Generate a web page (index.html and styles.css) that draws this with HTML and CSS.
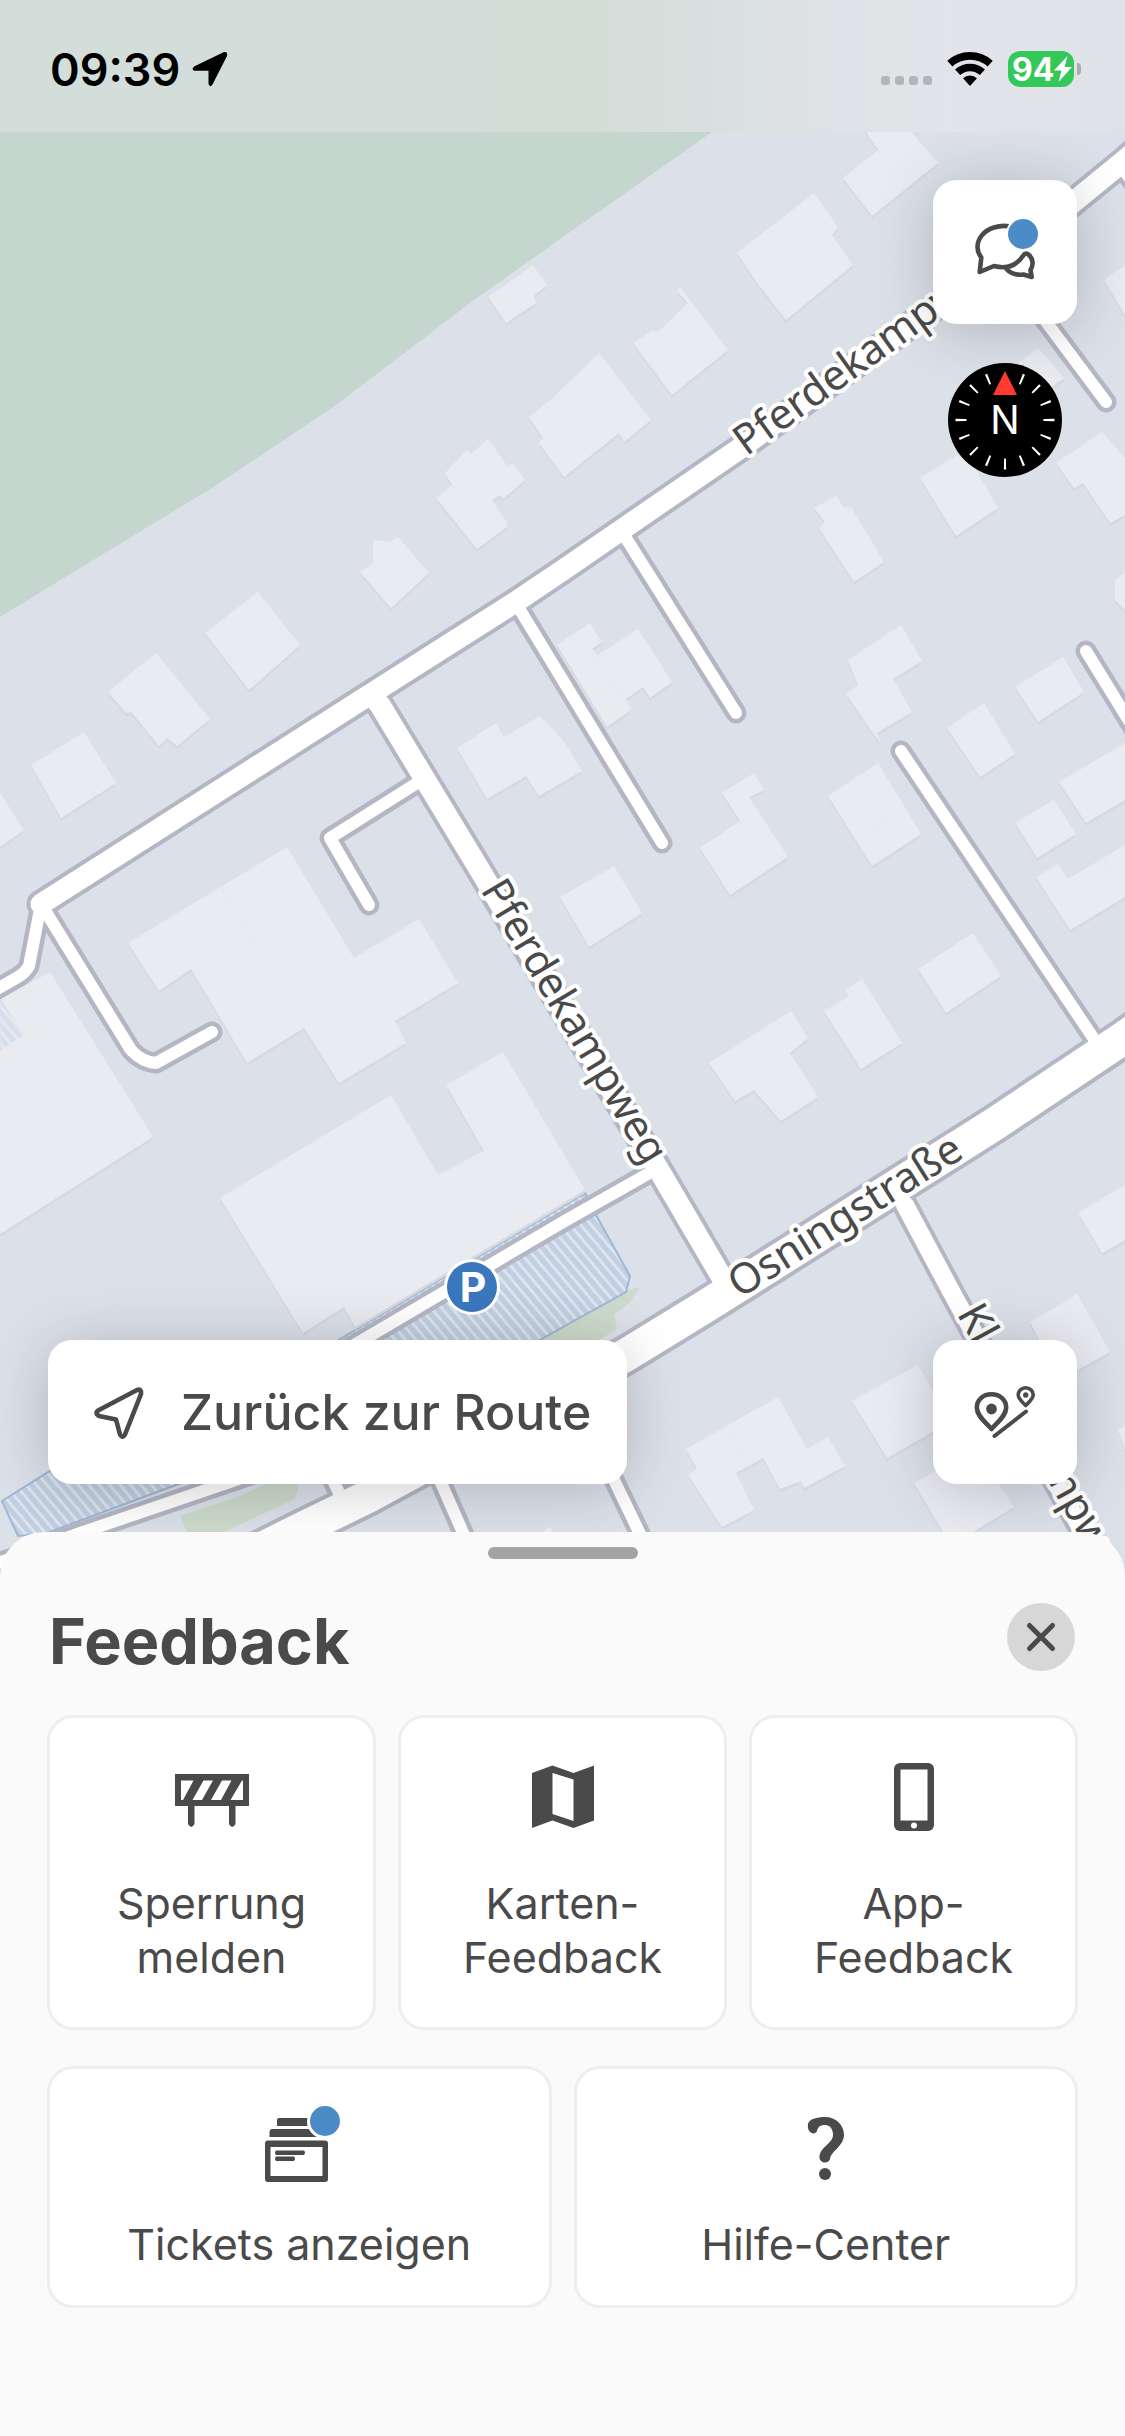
FILE: index.html
```html
<!DOCTYPE html>
<html lang="de">
<head>
    <meta charset="UTF-8">
    <meta name="viewport" content="width=device-width, initial-scale=1.0">
    <title>Feedback</title>
    <link rel="stylesheet" href="styles.css">
</head>
<body>
    <main class="map">
        <svg class="map-canvas" viewBox="0 0 1125 1580" preserveAspectRatio="xMidYMin slice" aria-hidden="true">
            <defs>
                <pattern id="hatch" width="8" height="8" patternUnits="userSpaceOnUse" patternTransform="rotate(-40)">
                    <rect width="8" height="8" fill="#c1cfe1"/>
                    <rect width="3" height="8" fill="#dce4ef"/>
                </pattern>
                <path id="main-road" d="M41 904 L366 697 L517 601 L563 570 L742 447 L934 308 L1060 213 L1125 160 L1150 138"/>
                <path id="south-road" d="M374 698 L380 705 L478 867 L663 1177 L728 1288"/>
                <path id="osning" d="M200 1580 L295 1532 L367 1497 L450 1452 L626 1355 L706 1306 L993 1125 L1125 1037 L1160 1012"/>
                <path id="east-road" d="M905 1205 L952 1293 L1083 1532 L1105 1580"/>
                <g id="lanes">
                    <path d="M425 778 L330 838 L369 905"/>
                    <path d="M517 605 L662 843"/>
                    <path d="M624 535 L736 713"/>
                    <path d="M901 751 L1098 1045"/>
                    <path d="M1086 651 L1150 755"/>
                    <path d="M1000 260 L1106 402"/>
                    <path d="M1120 165 L1150 205"/>
                    <path d="M41 904 L36 930 L29 966 Q26 972 18 977 L-10 993"/>
                    <path d="M41 904 L131 1050 Q142 1062 156 1063 L212 1032"/>
                    <path d="M660 1167 L563 1222 L361 1341 L221 1420"/>
                    <path d="M300 1458 L221 1485 L83 1532 L-10 1566"/>
                    <path d="M345 1505 L318 1450"/>
                    <path d="M425 1450 L442 1485 L475 1560"/>
                    <path d="M595 1440 L614 1480 L655 1565"/>
                </g>
                <path id="label-north" d="M563 570 L742 445 L934 307 L1060 213"/>
                <path id="label-osning" d="M706 1306 L993 1125"/>
            </defs>

            <rect width="1125" height="1580" fill="#dce0e9"/>
            <path fill="#c5d6ce" d="M0 0H900L712 132L563 237L470 303L336 405L215 486L13 609L0 617Z"/>

            <g class="park">
                <path d="M640 1287L630 1302L614 1315L617 1329L599 1340L537 1362V1330L626 1291Z"/>
                <path d="M180 1516L235 1498L264 1485L299 1470V1485L295 1499L224 1532H187Z"/>
            </g>
            <g class="parking">
                <path d="M330 1345L585 1193L596 1215L630 1276L626 1292L563 1327L531 1345Z"/>
                <path d="M2 1501L50 1471L120 1440L230 1465L176 1485L47 1533L18 1536Z"/>
            </g>

            <g class="buildings">
                <path d="M488 297L533 265L547 285L534 296L536 303L506 323Z"/>
                <path d="M373 540L390 542L398 537L429 573L391 608L360 572L373 563Z"/>
                <path d="M445 473L467 450L471 454L488 439L508 467L513 463L525 480L503 499L500 495L492 500L507 523V527L477 549L436 498L452 485Z"/>
                <path d="M529 417L553 398L599 353L651 420L624 442L619 433L564 477L539 443L543 438Z"/>
                <path d="M633 343L653 330L658 332L688 303L677 291L680 287L728 350L672 395Z"/>
                <path d="M737 253L814 193L838 227L832 235L853 265L786 320L757 283Z"/>
                <path d="M843 178L878 150L866 132L850 110H895L911 132L938 163L872 216Z"/>
                <path d="M814 508L836 496L844 508L851 507L884 562L854 582L819 528L825 522Z"/>
                <path d="M920 478L957 455L972 463L998 508L956 536Z"/>
                <path d="M1056 463L1102 432L1125 458V515L1110 523L1083 483L1074 488Z"/>
                <path d="M1018 363L1038 348L1064 378L1045 392Z"/>
                <path d="M1104 280L1125 265V315Z"/>
                <path d="M1115 580L1125 572V610L1115 600Z"/>
                <path d="M205 633L258 592L300 645L249 690Z"/>
                <path d="M108 692L156 653L210 719L177 746L167 738L159 746L131 712L126 713Z"/>
                <path d="M31 765L84 732L116 783L61 818Z"/>
                <path d="M0 793L24 830L0 847Z"/>
                <path d="M128 943L287 847L354 958L419 919L458 983L395 1021L406 1043L339 1083L304 1028L247 1063L191 969L159 991Z"/>
                <path d="M0 1000L50 972L153 1137L0 1234Z"/>
                <path d="M220 1198L391 1095L438 1175L484 1151L446 1085L503 1052L585 1190L355 1327L344 1307L303 1333Z"/>
                <path d="M457 748L496 723L504 737L540 716L563 740L582 771L539 796L526 776L487 799Z"/>
                <path d="M557 645L590 623L602 642L592 649L598 655L638 629L672 682L650 698L643 687L626 699L631 710L607 727Z"/>
                <path d="M560 897L614 866L642 913L589 947Z"/>
                <path d="M722 793L754 773L764 790L749 797L788 857L730 895L700 848L740 821Z"/>
                <path d="M828 796L878 763L921 834L872 866Z"/>
                <path d="M848 660L901 625L922 661L893 679L912 712L877 733L880 743L846 694L858 685Z"/>
                <path d="M947 728L984 703L1015 754L980 777Z"/>
                <path d="M1015 687L1063 657L1084 692L1038 722Z"/>
                <path d="M1059 782L1125 743V800L1086 823Z"/>
                <path d="M1015 823L1054 800L1076 834L1037 858Z"/>
                <path d="M1036 877L1058 864L1068 879L1125 845V897L1070 930Z"/>
                <path d="M918 969L973 933L1001 976L946 1013Z"/>
                <path d="M824 1011L848 997L846 990L862 979L902 1043L861 1069Z"/>
                <path d="M709 1063L791 1011L808 1038L790 1053L818 1097L781 1121L754 1090L735 1101Z"/>
                <path d="M1078 1213L1125 1185V1240L1102 1253Z"/>
                <path d="M1030 1322L1077 1294L1110 1352L1060 1380Z"/>
                <path d="M852 1401L918 1365L950 1422L887 1458Z"/>
                <path d="M914 1483L975 1450L1014 1507L960 1540L943 1532Z"/>
                <path d="M686 1449L778 1397L807 1449L828 1437L845 1466L804 1488L801 1481L780 1489L763 1458L736 1473L754 1510L722 1527L688 1475L697 1469Z"/>
                <path d="M1118 1430L1125 1425V1450Z"/>
                <path d="M540 1533L550 1527L556 1536Z"/>
            </g>
            <path class="seams" d="M222 888L304 1028M581 636L631 710M865 835L903 808M730 1431L747 1465M1104 858L1124 897M519 280L528 292"/>
            <path fill="url(#hatch)" opacity=".45" d="M0 998L24 1035L0 1051Z"/>

            <g class="roads casing">
                <use href="#lanes"/>
                <use href="#east-road" class="medium"/>
                <use href="#south-road" class="main"/>
                <use href="#main-road" class="main"/>
                <use href="#osning" class="wide"/>
            </g>
            <g class="roads fill">
                <use href="#lanes"/>
                <use href="#east-road" class="medium"/>
                <use href="#south-road" class="main"/>
                <use href="#main-road" class="main"/>
                <use href="#osning" class="wide"/>
            </g>

            <g class="street-names">
                <text dy="12"><textPath href="#label-north" startOffset="215">Pferdekampweg</textPath></text>
                <text dy="10"><textPath href="#south-road" startOffset="219">Pferdekampweg</textPath></text>
                <text dy="12"><textPath href="#label-osning" startOffset="32">Osningstraße</textPath></text>
                <text dy="6"><textPath href="#east-road" startOffset="120">Kl</textPath></text>
                <text dy="6"><textPath href="#east-road" startOffset="296">mpweg</textPath></text>
            </g>

            <circle cx="472" cy="1287" r="28" fill="#fff"/>
            <circle cx="472" cy="1287" r="25" fill="#3a77bd"/>
            <text class="parking-sign" x="473" y="1302">P</text>
        </svg>

        <header class="status-bar">
            <div class="status-left">
                <span class="clock">09:39</span>
                <svg width="36" height="36" viewBox="0 0 36 36" aria-hidden="true">
                    <path d="M31.500 1.200L2 15.500Q-1 19 2.500 19.800H16.500V33Q18 37 20.500 33.500L35 5Q36 0 31.500 1.200Z"/>
                </svg>
            </div>
            <div class="status-right">
                <svg width="51" height="36" viewBox="0 0 51 36" fill="#b4b5ba" aria-hidden="true">
                    <rect y="25" width="9" height="9" rx="3"/>
                    <rect x="14" y="25" width="9" height="9" rx="3"/>
                    <rect x="28" y="25" width="9" height="9" rx="3"/>
                    <rect x="42" y="25" width="9" height="9" rx="3"/>
                </svg>
                <svg width="46" height="36" viewBox="0 0 46 36" aria-hidden="true">
                    <g fill="none" stroke="#000" stroke-width="7.600">
                        <path d="M2.800 12.600A30.200 30.200 0 0 1 43.200 12.600"/>
                        <path d="M10.600 21.300A18.500 18.500 0 0 1 35.400 21.300"/>
                    </g>
                    <path d="M23 35L16 27.200A10.500 10.500 0 0 1 30 27.200Z"/>
                </svg>
                <div class="battery">
                    <span>94</span>
                    <svg width="18" height="26" viewBox="0 0 18 26" fill="#fff" aria-hidden="true">
                        <path d="M13.500 0L0 14.500H7.500L4.500 26L18 11H10.500Z"/>
                    </svg>
                </div>
            </div>
        </header>

        <div class="side-controls">
            <button type="button" class="float-btn" aria-label="Feedback">
                <svg width="64" height="64" viewBox="0 0 64 64" aria-hidden="true">
                    <g fill="none" stroke="#4a4a4a" stroke-width="4.600" stroke-linejoin="round">
                        <path d="M36 6.200C31 5.500 26 5.800 21 7.500C10 11 4.500 19 4.500 27C4.500 31.500 6 34.500 8.300 37.500L6.700 52L21 46C34 49.500 44 45 50.300 35.500C51.500 33 54 33 56 35C60.500 39 60.500 45.500 57.500 50L58.700 57L50.500 54.500C43 55.500 37 53 33 48.500"/>
                    </g>
                    <circle cx="50" cy="14" r="17" fill="#fff"/>
                    <circle cx="50" cy="14" r="15" fill="#4a8bc8"/>
                </svg>
            </button>
            <svg class="compass" width="114" height="114" viewBox="-57 -57 114 114" role="img" aria-label="Kompass">
                <circle r="57"/>
                <circle r="44" fill="none" stroke="#fff" stroke-width="11" pathLength="160" stroke-dasharray="1.200 8.800" stroke-dashoffset=".6"/>
                <path d="M-4 -52H4V-30H-4Z"/>
                <path d="M0 -49L12 -25H-12Z" fill="#ff3b30"/>
                <text y="14">N</text>
            </svg>
        </div>

        <div class="bottom-controls">
            <button type="button" class="float-btn route-btn">
                <svg width="56" height="56" viewBox="0 0 56 56" fill="none" stroke="#4a4a4a" stroke-width="4.600" stroke-linejoin="round" aria-hidden="true">
                    <path d="M46 6L8 26Q3 29 8 32L25 35.500L29 50.500Q31.500 55 34 50.500L50 10Q50.500 4.500 46 6Z"/>
                </svg>
                Zurück zur Route
            </button>
            <button type="button" class="float-btn" aria-label="Route anzeigen">
                <svg width="64" height="64" viewBox="0 0 64 64" fill="none" stroke="#4a4a4a" stroke-linejoin="round" stroke-linecap="round" aria-hidden="true">
                    <path stroke-width="4.600" d="M18.500 49C13 42.500 3.800 36 3.800 27.500C3.800 20 10 14.300 18.500 14.300S33.200 20 33.200 27.500C33.200 36 24 42.500 18.500 49Z"/>
                    <path stroke-width="3.600" d="M52.700 25.500C49.500 22 45.200 19 45.200 14.800C45.200 11 48.500 7.800 52.700 7.800S60.200 11 60.200 14.800C60.200 19 56 22 52.700 25.500Z"/>
                    <path stroke-width="4" d="M21.500 56L53 31.500"/>
                    <circle cx="18.500" cy="29" r="5.400" fill="#4a4a4a" stroke="none"/>
                    <circle cx="52.700" cy="15" r="2.700" fill="#4a4a4a" stroke="none"/>
                </svg>
            </button>
        </div>
    </main>

    <section class="sheet">
        <div class="handle"></div>
        <div class="sheet-header">
            <h1>Feedback</h1>
            <button type="button" class="close-btn" aria-label="Schließen">
                <svg width="32" height="32" viewBox="0 0 32 32" fill="none" stroke="#4a4a4a" stroke-width="5" stroke-linecap="round" aria-hidden="true">
                    <path d="M4.500 4.500L27.500 27.500M27.500 4.500L4.500 27.500"/>
                </svg>
            </button>
        </div>

        <div class="cards three">
            <button type="button" class="card">
                <svg width="76" height="76" viewBox="0 0 76 76" aria-hidden="true">
                    <path fill-rule="evenodd" d="M1 15H75V47H1ZM7 21.500V41H9L19.500 21.500ZM29.500 21.500L18.500 41H28L39 21.500ZM48 21.500L37 41H47L57.500 21.500ZM68 21.500L56.500 41H69V21.500Z"/>
                    <path d="M14 46H20.500V65Q17.200 71 14 65ZM55 46H61.500V65Q58.200 71 55 65Z"/>
                </svg>
                <span>Sperrung melden</span>
            </button>
            <button type="button" class="card">
                <svg width="76" height="76" viewBox="0 0 76 76" aria-hidden="true">
                    <path fill-rule="evenodd" d="M7 14L27.500 6.500L48.500 14L69 6.500V61.500L48.500 69L27.500 61.500L7 69ZM27.500 14V55L48.500 62V20.500Z"/>
                </svg>
                <span>Karten-Feedback</span>
            </button>
            <button type="button" class="card">
                <svg width="76" height="76" viewBox="0 0 76 76" aria-hidden="true">
                    <rect x="18" y="4" width="40" height="68" rx="6"/>
                    <rect x="24.500" y="10.500" width="27" height="51" fill="#fff"/>
                    <circle cx="38" cy="66.500" r="3" fill="#fff"/>
                </svg>
                <span>App-Feedback</span>
            </button>
        </div>

        <div class="cards two">
            <button type="button" class="card">
                <svg width="76" height="76" viewBox="0 0 76 76" aria-hidden="true">
                    <path d="M18 8H50V16H16V10Q16 8 18 8ZM11 19H56V27H8.500V22Q9 19 11 19Z"/>
                    <path fill-rule="evenodd" d="M7 30.500H64Q67 30.500 67 33.500V69Q67 72 64 72H7Q4 72 4 69V33.500Q4 30.500 7 30.500ZM9.500 37V66H61.500V37Z"/>
                    <path d="M15 40.500H43Q45 42.700 43 45H15Q13 42.700 15 40.500ZM15 46.500H33Q35 48.700 33 51H15Q13 48.700 15 46.500Z"/>
                    <circle cx="64" cy="11" r="18" fill="#fff"/>
                    <circle cx="64" cy="11" r="15" fill="#4a8bc8"/>
                </svg>
                <span>Tickets anzeigen</span>
            </button>
            <button type="button" class="card">
                <svg width="76" height="76" viewBox="0 0 76 76" aria-hidden="true">
                    <path d="M20 14C21 9 29 7 37 7C48 7 56 15 56 25C56 36 43 41 42 49C41 54 32 53.500 31.500 48C31 37 45 34 45 25C45 19 42 15 37 15C32 15 30 17 29 21C27 26 18.500 23 20 14Z"/>
                    <circle cx="37" cy="64" r="6"/>
                </svg>
                <span>Hilfe-Center</span>
            </button>
        </div>
    </section>
</body>
</html>
```
FILE: styles.css
```css
* {
    box-sizing: border-box;
}
body {
    margin: 0;
    min-height: 100vh;
    display: flex;
    flex-direction: column;
    font-family: Inter, "Liberation Sans", sans-serif;
    color: #4a4a4a;
    background: #fafafa;
}
button {
    font: inherit;
    color: inherit;
    border: 0;
    cursor: pointer;
}
svg {
    display: block;
    flex: none;
    overflow: visible;
}

/* map */
.map {
    position: relative;
    flex: 1;
    display: flex;
    flex-direction: column;
    margin-bottom: -48px;
    padding-bottom: 96px;
    overflow: hidden;
}
.map-canvas {
    position: absolute;
    inset: 0;
    width: 100%;
    height: 100%;
}
.park {
    fill: #ccdacb;
}
.parking {
    fill: url(#hatch);
    stroke: #9db7d6;
    stroke-width: 2;
}
.buildings {
    fill: #eaebf1;
    filter: drop-shadow(0 3px 0 #d6d9e0);
}
.seams {
    fill: none;
    stroke: #e6e9f1;
    stroke-width: 2;
}
.roads {
    fill: none;
    stroke-linecap: round;
    stroke-linejoin: round;
}
.casing {
    stroke: #b4b6c4;
    stroke-width: 21px;
}
.casing .medium {
    stroke-width: 26px;
}
.casing .main {
    stroke-width: 29px;
}
.casing .wide {
    stroke-width: 41px;
}
.roads.fill {
    stroke: #fff;
    stroke-width: 12px;
}
.fill .medium {
    stroke-width: 18px;
}
.fill .main {
    stroke-width: 21px;
}
.fill .wide {
    stroke-width: 33px;
}
.street-names {
    font-family: "Noto Sans", sans-serif;
    font-size: 42px;
    fill: #4a4a4a;
    stroke: #fff;
    stroke-width: 8px;
    stroke-linejoin: round;
    paint-order: stroke;
}
.parking-sign {
    font-size: 41px;
    font-weight: 700;
    text-anchor: middle;
    fill: #fff;
}

/* status bar */
.status-bar {
    position: relative;
    display: flex;
    justify-content: space-between;
    align-items: center;
    height: 132px;
    padding: 6px 43px 0 50px;
    color: #000;
    background: linear-gradient(90deg, #d3ddd9 0%, #d3ddda 35%, #d3ddd7 52%, #dde1e4 70%, #e3e4e9 84%, #dee2e7 100%);
}
.status-left {
    display: flex;
    align-items: center;
    gap: 12px;
}
.clock {
    font-size: 45px;
    font-weight: 600;
}
.status-right {
    display: flex;
    align-items: center;
    gap: 15px;
}
.battery {
    position: relative;
    display: flex;
    align-items: center;
    width: 66px;
    height: 36px;
    margin-right: 8px;
    padding-left: 4px;
    border-radius: 12px;
    background: #34c759;
    color: #fff;
    font-size: 32px;
    font-weight: 700;
}
.battery::after {
    content: "";
    position: absolute;
    right: -7px;
    top: 12px;
    width: 4px;
    height: 12px;
    border-radius: 0 4px 4px 0;
    background: #a9aaae;
}

/* floating controls */
.side-controls {
    position: relative;
    display: flex;
    flex-direction: column;
    align-items: flex-end;
    gap: 39px;
    padding: 48px 48px 0;
}
.bottom-controls {
    position: relative;
    display: flex;
    justify-content: space-between;
    margin-top: auto;
    padding: 0 48px;
}
.float-btn {
    display: flex;
    justify-content: center;
    align-items: center;
    width: 144px;
    height: 144px;
    padding: 0;
    border-radius: 24px;
    background: #fff;
    box-shadow: 0 6px 60px rgba(0, 0, 0, 0.2);
}
.route-btn {
    width: auto;
    gap: 34px;
    padding: 0 36px 0 43px;
    font-size: 50px;
    font-weight: 500;
}
.compass {
    margin-right: 15px;
}
.compass text {
    font-size: 39px;
    text-anchor: middle;
    fill: #fff;
}

/* bottom sheet */
.sheet {
    position: relative;
    padding: 15px 47px 128px;
    border-radius: 44px 44px 0 0;
    background: #fafafa;
}
.handle {
    width: 150px;
    height: 12px;
    margin: 0 auto 44px;
    border-radius: 6px;
    background: #a3a3a3;
}
.sheet-header {
    display: flex;
    justify-content: space-between;
    align-items: flex-end;
    margin-bottom: 44px;
    padding: 0 3px 0 2px;
}
h1 {
    margin: 0;
    font-size: 63px;
    line-height: 60px;
    font-weight: 700;
}
.close-btn {
    display: flex;
    justify-content: center;
    align-items: center;
    width: 68px;
    height: 68px;
    padding: 0;
    border-radius: 50%;
    background: #d7d7d7;
}
.cards {
    display: grid;
    gap: 22px;
}
.three {
    grid-template-columns: repeat(3, 1fr);
    margin-bottom: 36px;
}
.two {
    grid-template-columns: repeat(2, 1fr);
}
.card {
    display: flex;
    flex-direction: column;
    align-items: center;
    gap: 41px;
    padding: 41px 40px 43px;
    border: 3px solid #eee;
    border-radius: 26px;
    background: #fff;
    font-size: 43px;
    line-height: 54px;
}
.two .card {
    gap: 31px;
    padding: 41px 20px 34px;
}
.card svg {
    fill: #4a4a4a;
}
```
